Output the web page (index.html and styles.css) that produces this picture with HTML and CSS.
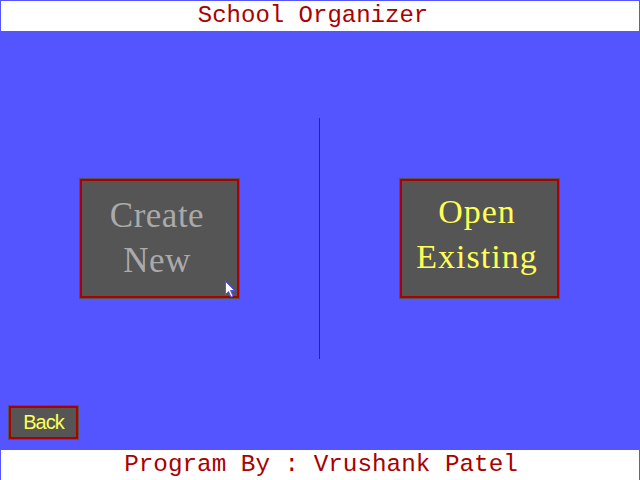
FILE: index.html
```html
<!DOCTYPE html>
<html>
<head>
<meta charset="utf-8">
<link rel="stylesheet" href="styles.css">
</head>
<body>
<div class="screen">
  <header class="title-bar"><span class="title">School Organizer</span></header>
  <main class="main">
    <div class="choices">
      <div class="choice choice-create">Create<br>New</div>
      <div class="divider"></div>
      <div class="choice choice-open">Open<br>Existing</div>
    </div>
    <div class="back">Back</div>
  </main>
  <footer class="footer-bar"><span class="credit">Program By : Vrushank Patel</span></footer>
  <svg class="cursor" width="11" height="17" viewBox="0 0 11 17">
    <path d="M0.5 0.5 L0.5 13.5 L3.5 10.5 L6 16 L8 15 L5.5 9.5 L9.5 9.5 Z" fill="#ffffff" stroke="#5555ff" stroke-width="1"/>
  </svg>
</div>
</body>
</html>
```

FILE: styles.css
```css
html, body {
  margin: 0;
  padding: 0;
}
body {
  background: #5555ff;
}
.screen {
  position: relative;
  width: 640px;
  height: 480px;
  background: #5555ff;
  display: flex;
  flex-direction: column;
  overflow: hidden;
}
.title-bar {
  margin: 1px 1px 0 1px;
  height: 30px;
  background: #ffffff;
  display: flex;
  align-items: center;
  justify-content: center;
}
.title, .credit {
  font-family: "Liberation Mono", monospace;
  font-size: 24px;
  color: #aa0000;
  line-height: 30px;
  white-space: pre;
}
.title {
  margin-right: 14px;
}
.credit {
  font-size: 24.3px;
  margin-left: 2px;
}
.main {
  height: 419px;
  display: flex;
  flex-direction: column;
}
.choices {
  margin-top: 87px;
  padding-left: 79px;
  display: flex;
  align-items: center;
  gap: 79px;
}
.divider {
  width: 1px;
  height: 241px;
  background: #aa0000;
}
.choice {
  box-sizing: border-box;
  width: 161px;
  height: 121px;
  background: #555555;
  border: 1px solid #555555;
  box-shadow: inset 0 0 0 2px #aa0000;
  font-family: "Liberation Serif", serif;
  font-size: 35px;
  line-height: 45px;
  text-align: center;
  display: flex;
  align-items: center;
  justify-content: center;
  letter-spacing: 0.5px;
}
.choice-create {
  color: #aaaaaa;
  padding-bottom: 2px;
  padding-right: 5px;
}
.choice-open {
  color: #ffff55;
  font-size: 34px;
  letter-spacing: 1px;
  padding-bottom: 10px;
  padding-right: 5px;
}
.back {
  box-sizing: border-box;
  margin: auto 0 10px 8px;
  width: 71px;
  height: 35px;
  background: #555555;
  border: 1px solid #555555;
  box-shadow: inset 0 0 0 2px #aa0000;
  color: #ffff55;
  font-family: "Liberation Sans", sans-serif;
  font-size: 20px;
  letter-spacing: -1px;
  display: flex;
  align-items: center;
  justify-content: center;
}
.footer-bar {
  margin: 0 1px;
  height: 30px;
  background: #ffffff;
  display: flex;
  align-items: center;
  justify-content: center;
}
.cursor {
  position: absolute;
  left: 225px;
  top: 281px;
}
```
